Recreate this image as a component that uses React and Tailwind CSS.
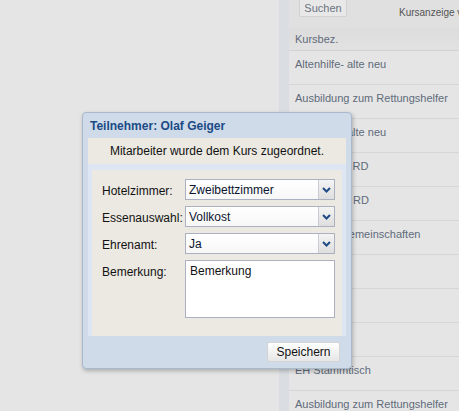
import React from 'react';

const rows = [
  'Altenhilfe- alte neu',
  'Ausbildung zum Rettungshelfer',
  'Altenhilfe- alte neu',
  'Ausbildung RD',
  'Fortbildung RD',
  'Leben in Gemeinschaften',
  'Pflegekurs',
  'Erste Hilfe',
  'Grundkurs',
  'EH Stammtisch',
  'Ausbildung zum Rettungshelfer',
];

const Chevron = () => (
  <svg width="9" height="6" viewBox="0 0 9 6">
    <path d="M1 1 L4.5 4.5 L8 1" fill="none" stroke="#1f4a86" strokeWidth="2" />
  </svg>
);

const Select = ({ value }) => (
  <div className="flex h-[21px] w-[150px] border border-[#abb1c3] bg-gradient-to-b from-white to-[#f7f7f7]">
    <div className="flex flex-1 items-center pl-[3px] text-[12px] text-[#0b1530]">{value}</div>
    <div className="flex w-[16px] items-center justify-center border-l border-[#c9ccd3] bg-gradient-to-b from-[#f4f4f4] to-[#dedede]">
      <Chevron />
    </div>
  </div>
);

const Field = ({ label, children }) => (
  <div className="flex items-start">
    <div className="w-[83px] pt-[3px] text-[12px] text-[#111]">{label}</div>
    {children}
  </div>
);

export default function App() {
  return (
    <div
      className="relative flex h-[411px] w-[459px] overflow-hidden bg-[#e5e5e5]"
      style={{ fontFamily: '"Liberation Sans", Arial, sans-serif' }}
    >
      <div className="w-[279px] shrink-0" />
      <div className="w-[10px] shrink-0 bg-[#dadde2]" />

      <div className="flex min-w-0 flex-1 flex-col overflow-hidden">
        <div className="flex h-[28px] shrink-0 items-start bg-[#e0e0e0]">
          <div className="ml-[10px] flex h-[17px] w-[48px] shrink-0 items-center justify-center rounded-b-[2px] border border-t-0 border-[#d2d2d2] bg-[#e8e8e8] text-[11px] text-[#6a7380]">
            Suchen
          </div>
          <div className="ml-[52px] mt-[5px] overflow-hidden whitespace-nowrap text-[10px] text-[#555]">Kursanzeige v</div>
        </div>
        <div className="flex h-[23px] shrink-0 items-center border-b border-[#d2d2d2] bg-gradient-to-b from-[#dcdcdc] to-[#e2e2e2] pl-[6px] text-[11px] text-[#5f6b7a]">
          Kursbez.
        </div>
        {rows.map((r, i) => (
          <div
            key={i}
            className="h-[34px] shrink-0 overflow-hidden whitespace-nowrap border-b border-[#d6d6d6] pl-[6px] pt-[5px] text-[11px] text-[#5f6b7a]"
          >
            {r}
          </div>
        ))}
      </div>

      <div className="absolute left-[82px] top-[112px] flex h-[257px] w-[270px] flex-col rounded-[4px] border border-[#a9b8ca] bg-[#cfdbe9] shadow-[1px_2px_4px_rgba(0,0,0,0.25)]">
        <div className="flex h-[25px] items-center pl-[7px] text-[12px] font-bold text-[#1b4a85]">
          Teilnehmer: Olaf Geiger
        </div>
        <div className="mx-[5px] flex h-[26px] items-center justify-center bg-[#ece9e2] text-[12px] text-[#111]">
          Mitarbeiter wurde dem Kurs zugeordnet.
        </div>
        <div className="mx-[5px] bg-[#dde6f2] px-[4px] pt-[6px]">
          <div className="flex flex-col gap-[6px] bg-[#ece9e2] pb-[18px] pl-[10px] pt-[9px]">
            <Field label="Hotelzimmer:">
              <Select value="Zweibettzimmer" />
            </Field>
            <Field label="Essenauswahl:">
              <Select value="Vollkost" />
            </Field>
            <Field label="Ehrenamt:">
              <Select value="Ja" />
            </Field>
            <Field label="Bemerkung:">
              <div className="h-[58px] w-[150px] border border-[#abb1c3] bg-white pl-[4px] pt-[1px] text-[12px] text-[#111]">
                Bemerkung
              </div>
            </Field>
          </div>
        </div>
        <div className="flex justify-end pr-[11px] pt-[6px]">
          <div className="flex h-[20px] w-[73px] items-center justify-center rounded-[2px] border border-[#d4d4d4] bg-gradient-to-b from-white to-[#e6e6e6] text-[12px] text-[#111]">
            Speichern
          </div>
        </div>
      </div>
    </div>
  );
}
